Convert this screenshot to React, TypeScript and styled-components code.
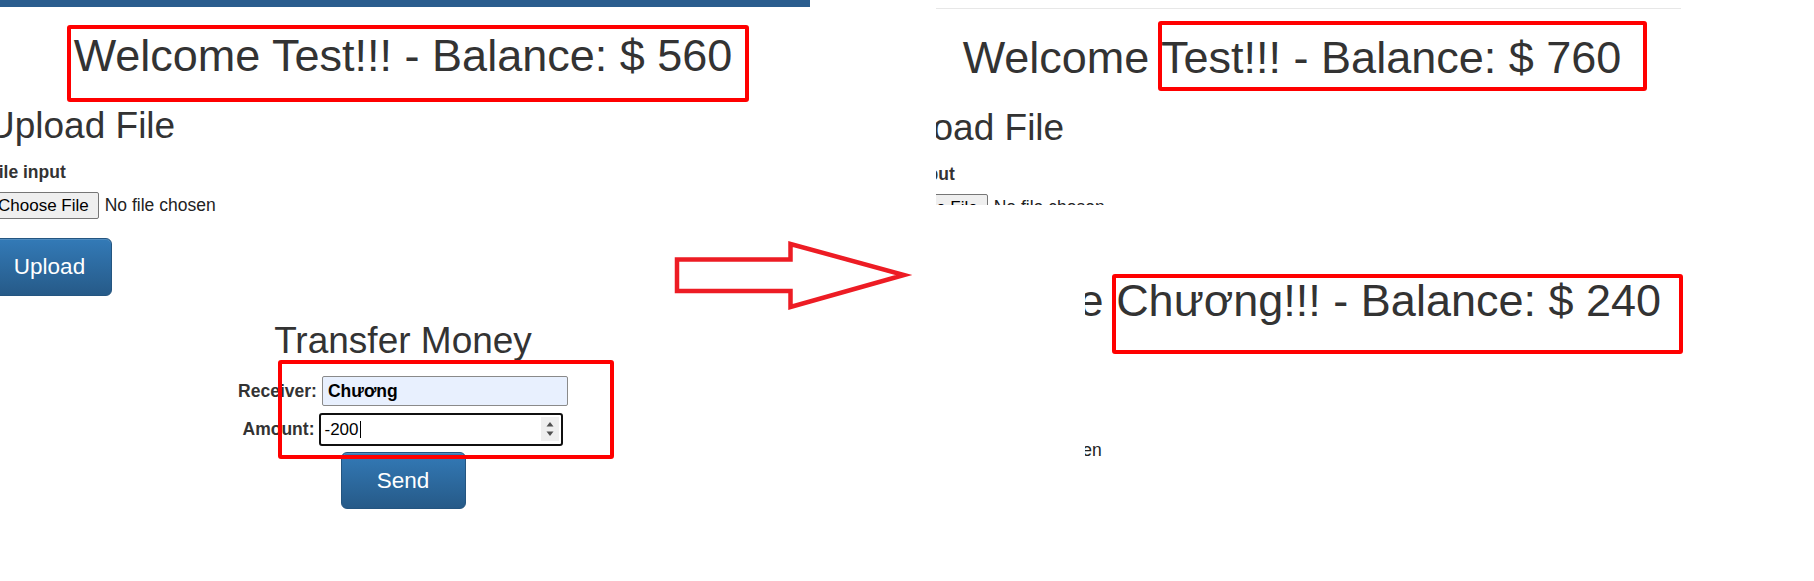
import React from 'react';
import styled, { createGlobalStyle } from 'styled-components';

const GlobalStyle = createGlobalStyle`
  html, body {
    margin: 0;
    padding: 0;
    background: #fff;
  }
  body {
    font-family: "Liberation Sans", Arial, "DejaVu Sans", sans-serif;
    color: #333;
  }
`;

/**
 * the whole collage: two screenshots pasted side by side
 */
const Canvas = styled.div`
  position: relative;
  display: flex;
  width: 1814px;
  height: 581px;
  overflow: hidden;
  background: #fff;
`;

const LeftShot = styled.div`
  flex: 0 0 810px;
  overflow: hidden;
`;

const RightColumn = styled.div`
  flex: 1;
  min-width: 0;
  display: flex;
  flex-direction: column;
`;

interface IShotProps {
  $inset: number;
  $width?: number;
  $height: number;
}
const Shot = styled.div<IShotProps>`
  flex: none;
  margin-left: ${(p) => p.$inset}px;
  width: ${(p) => (p.$width ? `${p.$width}px` : 'auto')};
  height: ${(p) => p.$height}px;
  overflow: hidden;
`;

/**
 * the bank page inside one screenshot
 */
const Page = styled.div<{ $shiftX: number; $shiftY: number }>`
  width: 830px;
  margin-left: ${(p) => p.$shiftX}px;
  padding-top: ${(p) => p.$shiftY}px;
  display: flow-root;
`;

type NavVariant = 'bar' | 'line' | 'none';
const Nav = styled.div<{ $variant: NavVariant }>`
  height: ${(p) => (p.$variant === 'bar' ? 7 : p.$variant === 'line' ? 8 : 0)}px;
  background: ${(p) => (p.$variant === 'bar' ? '#2a5d8e' : 'transparent')};
  border-bottom: ${(p) => (p.$variant === 'line' ? '1px solid #e7e7e7' : 'none')};
`;

const Welcome = styled.h1`
  margin: 24px 0 0;
  font-size: 45px;
  line-height: 50px;
  font-weight: normal;
  text-align: center;
  white-space: nowrap;
`;

const SectionTitle = styled.h2<{ $center?: boolean }>`
  margin: 24px 0 0;
  font-size: 37px;
  line-height: 41px;
  font-weight: normal;
  text-align: ${(p) => (p.$center ? 'center' : 'left')};
  white-space: nowrap;
`;

const FieldLabel = styled.label`
  display: block;
  margin-top: 16px;
  font-size: 17.5px;
  line-height: 20px;
  font-weight: bold;
`;

const FileRow = styled.div`
  display: flex;
  align-items: center;
  gap: 6px;
  height: 27px;
  margin-top: 10px;
`;

const FileButton = styled.div`
  box-sizing: border-box;
  height: 27px;
  display: flex;
  align-items: center;
  padding: 0 9px;
  border: 1px solid #767676;
  border-radius: 2px;
  background: #efefef;
  color: #000;
  font-size: 17px;
`;

const FileStatus = styled.span`
  font-size: 17.5px;
  color: #222;
`;

const PrimaryButton = styled.button<{ $center?: boolean; $top: number; $height: number }>`
  box-sizing: border-box;
  display: flex;
  align-items: center;
  justify-content: center;
  width: 125px;
  height: ${(p) => p.$height}px;
  margin: ${(p) => p.$top}px ${(p) => (p.$center ? 'auto' : '0')} 0 ${(p) => (p.$center ? 'auto' : '-1px')};
  padding: 0;
  border: 1px solid #245580;
  border-radius: 6px;
  background: linear-gradient(to bottom, #337ab7 0%, #265a88 100%);
  box-shadow: inset 0 1px 0 rgba(255, 255, 255, 0.15);
  color: #fff;
  font-family: inherit;
  font-size: 22.5px;
`;

const TransferRow = styled.div<{ $top: number }>`
  display: flex;
  justify-content: center;
  align-items: center;
  gap: 5px;
  margin-top: ${(p) => p.$top}px;
`;

const InlineLabel = styled.span`
  font-size: 17.5px;
  font-weight: bold;
  white-space: nowrap;
`;

const TextBox = styled.div<{ $focused?: boolean }>`
  position: relative;
  box-sizing: border-box;
  display: flex;
  align-items: center;
  width: ${(p) => (p.$focused ? 244 : 246)}px;
  height: ${(p) => (p.$focused ? 33 : 30)}px;
  padding-left: ${(p) => (p.$focused ? 3 : 5)}px;
  border: ${(p) => (p.$focused ? '2px solid #101010' : '1px solid #8a8a8a')};
  border-radius: ${(p) => (p.$focused ? 3 : 2)}px;
  background: ${(p) => (p.$focused ? '#fff' : '#e8f0fe')};
  color: #000;
  font-size: ${(p) => (p.$focused ? 17 : 17.5)}px;
  font-weight: ${(p) => (p.$focused ? 'normal' : 'bold')};
`;

const Caret = styled.span`
  display: inline-block;
  width: 1px;
  height: 17px;
  margin-left: 1px;
  background: #000;
`;

const Spinner = styled.div`
  position: absolute;
  top: 2px;
  right: 2px;
  width: 18px;
  height: 24px;
  background: #efefef;
  display: flex;
  align-items: center;
  justify-content: center;
`;

/**
 * annotation overlays drawn on top of the screenshots
 */
interface IMarkProps {
  $x: number;
  $y: number;
  $w: number;
  $h: number;
}
const Mark = styled.div<IMarkProps>`
  position: absolute;
  left: ${(p) => p.$x}px;
  top: ${(p) => p.$y}px;
  width: ${(p) => p.$w}px;
  height: ${(p) => p.$h}px;
  box-sizing: border-box;
  border: 4px solid #ff0000;
  border-radius: 3px;
  pointer-events: none;
`;

const ArrowSvg = styled.svg`
  position: absolute;
  left: 670px;
  top: 236px;
`;

interface IPageProps {
  name: string;
  balance: number;
  nav: NavVariant;
  shiftX: number;
  shiftY?: number;
}

const BankPage: React.FC<IPageProps> = ({ name, balance, nav, shiftX, shiftY = 0 }) => (
  <Page $shiftX={shiftX} $shiftY={shiftY}>
    <Nav $variant={nav} />
    <Welcome>Welcome {name}!!! - Balance: $ {balance}</Welcome>
    <SectionTitle>Upload File</SectionTitle>
    <FieldLabel>File input</FieldLabel>
    <FileRow>
      <FileButton>Choose File</FileButton>
      <FileStatus>No file chosen</FileStatus>
    </FileRow>
    <PrimaryButton $top={19} $height={58}>Upload</PrimaryButton>
    <SectionTitle $center>Transfer Money</SectionTitle>
    <TransferRow $top={15}>
      <InlineLabel>Receiver:</InlineLabel>
      <TextBox>Chương</TextBox>
    </TransferRow>
    <TransferRow $top={7}>
      <InlineLabel>Amount:</InlineLabel>
      <TextBox $focused>
        -200<Caret />
        <Spinner>
          <svg width="10" height="20" viewBox="0 0 10 20">
            <path d="M1.5 7.5 L5 3 L8.5 7.5 Z" fill="#505050" />
            <path d="M1.5 12.5 L5 17 L8.5 12.5 Z" fill="#505050" />
          </svg>
        </Spinner>
      </TextBox>
    </TransferRow>
    <PrimaryButton $center $top={6} $height={57}>Send</PrimaryButton>
  </Page>
);

const App: React.FC = () => (
  <>
    <GlobalStyle />
    <Canvas>
      <LeftShot>
        <BankPage name="Test" balance={560} nav="bar" shiftX={-12} />
      </LeftShot>
      <RightColumn>
        <Shot $inset={126} $width={745} $height={205}>
          <BankPage name="Test" balance={760} nav="line" shiftX={-59} />
        </Shot>
        <Shot $inset={275} $height={350}>
          <BankPage name="Chương" balance={240} nav="none" shiftX={-211} shiftY={47} />
        </Shot>
      </RightColumn>

      <ArrowSvg width="245" height="80" viewBox="0 0 245 80">
        <polygon
          points="7,23.5 120.5,23.5 120.5,8 234,39 120.5,71 120.5,55 7,55"
          fill="none"
          stroke="#ed1c24"
          strokeWidth="4.5"
          strokeLinejoin="miter"
        />
      </ArrowSvg>

      <Mark $x={67} $y={25} $w={682} $h={77} />
      <Mark $x={1158} $y={21} $w={489} $h={70} />
      <Mark $x={278} $y={360} $w={336} $h={99} />
      <Mark $x={1112} $y={274} $w={571} $h={80} />
    </Canvas>
  </>
);

export default App;
